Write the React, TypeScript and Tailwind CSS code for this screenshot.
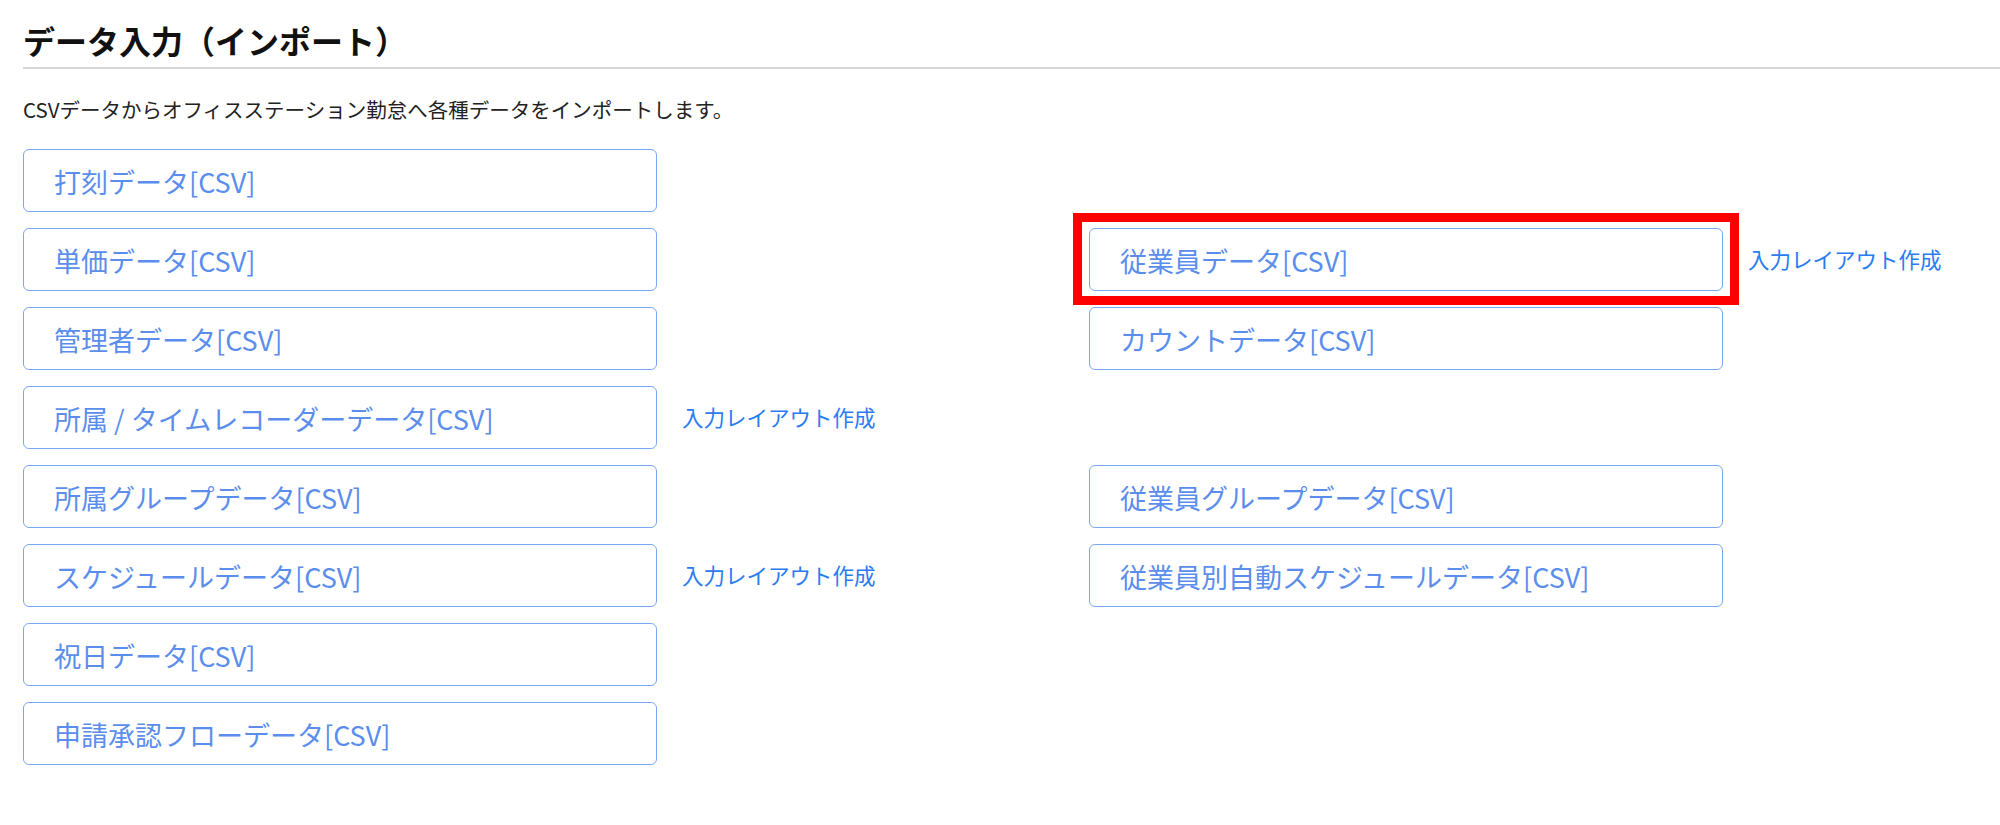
import React from "react";

type Cell = { label: string; layout?: boolean; highlight?: boolean } | null;

const ROWS: [Cell, Cell][] = [
  [{ label: "打刻データ[CSV]" }, null],
  [{ label: "単価データ[CSV]" }, { label: "従業員データ[CSV]", layout: true, highlight: true }],
  [{ label: "管理者データ[CSV]" }, { label: "カウントデータ[CSV]" }],
  [{ label: "所属 / タイムレコーダーデータ[CSV]", layout: true }, null],
  [{ label: "所属グループデータ[CSV]" }, { label: "従業員グループデータ[CSV]" }],
  [{ label: "スケジュールデータ[CSV]", layout: true }, { label: "従業員別自動スケジュールデータ[CSV]" }],
  [{ label: "祝日データ[CSV]" }, null],
  [{ label: "申請承認フローデータ[CSV]" }, null],
];

function ImportCell({ cell }: { cell: Cell }) {
  if (!cell) return <div className="h-[63px]" />;
  return (
    <div className="flex h-[63px] items-center gap-[25px]">
      <div className="relative shrink-0">
        <button
          type="button"
          className="flex h-[63px] w-[634px] items-center rounded-[6px] border border-[#78a8f4] bg-white pl-[30px] pt-[4px] text-left text-[27px] text-[#5b8eec]"
        >
          {cell.label}
        </button>
        {cell.highlight && (
          <span className="pointer-events-none absolute -inset-x-[16px] -bottom-[14px] -top-[15px] border-[9px] border-[#ff0000]" />
        )}
      </div>
      {cell.layout && (
        <a href="#" className="whitespace-nowrap text-[21.5px] text-[#2a7cf2]">
          入力レイアウト作成
        </a>
      )}
    </div>
  );
}

export default function App() {
  return (
    <div
      className="min-h-[825px] w-[2000px] bg-white pl-[23px] text-[#111]"
      style={{ fontFamily: '"Noto Sans CJK JP", "Noto Sans", sans-serif' }}
    >
      <h1 className="border-b-2 border-[#d6d6d6] pb-[3px] pt-[16px] text-[32px] font-bold leading-[48px] text-[#111]">
        データ入力（インポート）
      </h1>
      <p className="mt-[25px] text-[20.5px] leading-[30px] text-[#222]">
        CSVデータからオフィスステーション勤怠へ各種データをインポートします。
      </p>
      <div className="mt-[25px] grid grid-cols-[1066px_1fr] gap-y-[16px]">
        {ROWS.map(([left, right], i) => (
          <React.Fragment key={i}>
            <ImportCell cell={left} />
            <ImportCell cell={right} />
          </React.Fragment>
        ))}
      </div>
    </div>
  );
}
